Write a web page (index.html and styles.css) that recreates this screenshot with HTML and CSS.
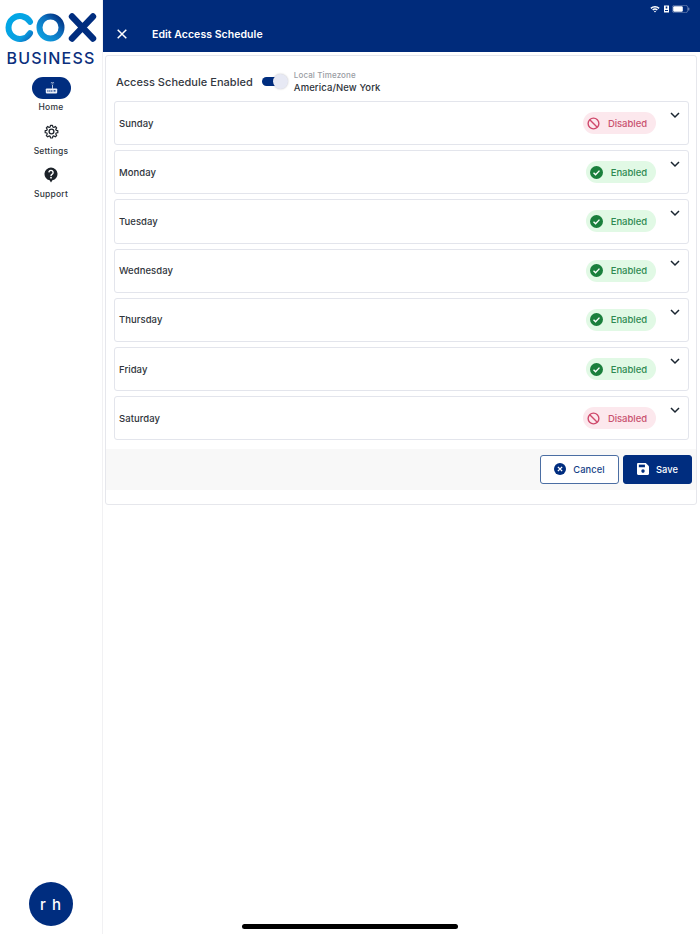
FILE: index.html
```html
<!DOCTYPE html>
<html lang="en">
<head>
<meta charset="utf-8">
<title>Edit Access Schedule</title>
<link rel="stylesheet" href="styles.css">
</head>
<body>
<div class="app">
  <aside class="sidebar">
    <div class="logo">
      <svg class="logo-cox" width="92" height="36" viewBox="0 0 92 36" aria-label="Cox logo">
        <defs>
          <linearGradient id="cg" x1="0" x2="1" y1="0" y2="1"><stop offset="0" stop-color="#00a8e6"/><stop offset="0.75" stop-color="#0aa0e2"/><stop offset="1" stop-color="#0b6fc0"/></linearGradient>
          <linearGradient id="og" x1="0" x2="1" y1="1" y2="0"><stop offset="0" stop-color="#0ea5e4"/><stop offset="0.6" stop-color="#0d6fbe"/><stop offset="1" stop-color="#002a7a"/></linearGradient>
        </defs>
        <path d="M25 11.8 A11.5 11.5 0 1 0 25 23.2" fill="none" stroke="url(#cg)" stroke-width="6" stroke-linecap="round"/>
        <circle cx="45.5" cy="17.5" r="11" fill="none" stroke="url(#og)" stroke-width="6"/>
        <path d="M67 6.5 L88 28.5 M88 6.5 L67 28.5" fill="none" stroke="#002d7f" stroke-width="6.4" stroke-linecap="round"/>
      </svg>
      <div class="logo-business">BUSINESS</div>
    </div>
    <nav class="nav">
      <div class="nav-item">
        <div class="nav-pill">
          <svg width="13" height="13" viewBox="0 0 16 16"><path d="M7.2 1.2a3 3 0 0 1 4 0M8.2 2.6a1.5 1.5 0 0 1 2 0" fill="none" stroke="#dfe6f3" stroke-width="0.9"/><rect x="8.8" y="3.5" width="0.9" height="5" fill="#fff"/><rect x="1" y="8" width="14" height="6" rx="1" fill="#e9eef8"/><path d="M3 10h1.2v2H3zM5.4 10h1.2v2H5.4zM7.8 10H9v2H7.8zM10.6 10.2h2.4v1.6h-2.4z" fill="#002d7f"/></svg>
        </div>
        <span class="nav-label">Home</span>
      </div>
      <div class="nav-item">
        <div class="nav-icon">
          <svg width="15" height="15" viewBox="0 0 24 24"><path d="M10.2 1.8h3.6l.6 3 1.9.8 2.6-1.7 2.5 2.5-1.7 2.6.8 1.9 3 .6v3.6l-3 .6-.8 1.9 1.7 2.6-2.5 2.5-2.6-1.7-1.9.8-.6 3h-3.6l-.6-3-1.9-.8-2.6 1.7-2.5-2.5 1.7-2.6-.8-1.9-3-.6v-3.6l3-.6.8-1.9L2.6 6.4l2.5-2.5 2.6 1.7 1.9-.8z" transform="translate(12 12) scale(.88) translate(-12 -13)" fill="none" stroke="#20262e" stroke-width="2.2" stroke-linejoin="round"/><circle cx="12" cy="12" r="3.8" fill="none" stroke="#20262e" stroke-width="2.2"/></svg>
        </div>
        <span class="nav-label">Settings</span>
      </div>
      <div class="nav-item">
        <div class="nav-icon">
          <svg width="14" height="16" viewBox="0 0 14 16"><path d="M7 .5a6.5 6.5 0 0 1 1.4 12.85L7 15.6l-1.4-2.25A6.5 6.5 0 0 1 7 .5z" fill="#1c2229"/><path d="M4.9 5.4a2.1 2.1 0 1 1 3.3 1.8c-.8.5-1.2.9-1.2 1.7" fill="none" stroke="#fff" stroke-width="1.4"/><circle cx="7" cy="10.7" r=".9" fill="#fff"/></svg>
        </div>
        <span class="nav-label">Support</span>
      </div>
    </nav>
    <div class="avatar">r h</div>
  </aside>
  <main class="main">
    <header class="topbar">
      <div class="status">
        <svg width="10" height="8" viewBox="0 0 10 8"><path d="M.4 2.8a6.6 6.6 0 0 1 9.2 0L8.6 3.9a5.2 5.2 0 0 0-7.2 0zM2.2 4.6a4 4 0 0 1 5.6 0l-1 1a2.6 2.6 0 0 0-3.6 0zM3.9 6.3a1.6 1.6 0 0 1 2.2 0L5 7.6z" fill="#fff"/></svg>
        <svg width="5" height="8" viewBox="0 0 5 8"><path d="M0 .5h5v7H0z" fill="#fff"/><path d="M1.7 1.6h1.6v2H1.7zM1 5h3v1H1z" fill="#002d7f"/></svg>
        <svg width="18" height="8" viewBox="0 0 18 8"><rect x=".3" y=".3" width="15.4" height="7.4" rx="2.2" fill="none" stroke="#8b9dc4" stroke-width=".6"/><rect x="1.2" y="1.2" width="9.6" height="5.6" rx="1.2" fill="#fff"/><rect x="16.3" y="2.6" width="1" height="2.8" rx=".5" fill="#8b9dc4"/></svg>
      </div>
      <div class="titlebar">
        <svg class="close" width="10" height="10" viewBox="0 0 10 10"><path d="M.7.7l8.6 8.6M9.3.7L.7 9.3" stroke="#fff" stroke-width="1.5" fill="none"/></svg>
        <h1 class="title">Edit Access Schedule</h1>
      </div>
    </header>
    <section class="card">
      <div class="card-head">
        <span class="enabled-label">Access Schedule Enabled</span>
        <div class="toggle"><div class="toggle-knob"></div></div>
        <div class="tz">
          <span class="tz-label">Local Timezone</span>
          <span class="tz-value">America/New York</span>
        </div>
      </div>
      <div class="days">
        <div class="day"><span class="day-name">Sunday</span><span class="badge badge-off"><svg width="13" height="13" viewBox="0 0 14 14"><circle cx="7" cy="7" r="5.8" fill="none" stroke="#cf4a6c" stroke-width="1.5"/><path d="M3 3l8 8" stroke="#cf4a6c" stroke-width="1.5"/></svg>Disabled</span><svg class="chev" width="10" height="7" viewBox="0 0 10 7"><path d="M1 1l4 4 4-4" fill="none" stroke="#1a2530" stroke-width="1.5"/></svg></div>
        <div class="day"><span class="day-name">Monday</span><span class="badge badge-on"><svg width="13" height="13" viewBox="0 0 14 14"><circle cx="7" cy="7" r="7" fill="#1a7f3c"/><path d="M3.8 7.2l2.2 2.2 4.2-4.4" fill="none" stroke="#fff" stroke-width="1.5"/></svg>Enabled</span><svg class="chev" width="10" height="7" viewBox="0 0 10 7"><path d="M1 1l4 4 4-4" fill="none" stroke="#1a2530" stroke-width="1.5"/></svg></div>
        <div class="day"><span class="day-name">Tuesday</span><span class="badge badge-on"><svg width="13" height="13" viewBox="0 0 14 14"><circle cx="7" cy="7" r="7" fill="#1a7f3c"/><path d="M3.8 7.2l2.2 2.2 4.2-4.4" fill="none" stroke="#fff" stroke-width="1.5"/></svg>Enabled</span><svg class="chev" width="10" height="7" viewBox="0 0 10 7"><path d="M1 1l4 4 4-4" fill="none" stroke="#1a2530" stroke-width="1.5"/></svg></div>
        <div class="day"><span class="day-name">Wednesday</span><span class="badge badge-on"><svg width="13" height="13" viewBox="0 0 14 14"><circle cx="7" cy="7" r="7" fill="#1a7f3c"/><path d="M3.8 7.2l2.2 2.2 4.2-4.4" fill="none" stroke="#fff" stroke-width="1.5"/></svg>Enabled</span><svg class="chev" width="10" height="7" viewBox="0 0 10 7"><path d="M1 1l4 4 4-4" fill="none" stroke="#1a2530" stroke-width="1.5"/></svg></div>
        <div class="day"><span class="day-name">Thursday</span><span class="badge badge-on"><svg width="13" height="13" viewBox="0 0 14 14"><circle cx="7" cy="7" r="7" fill="#1a7f3c"/><path d="M3.8 7.2l2.2 2.2 4.2-4.4" fill="none" stroke="#fff" stroke-width="1.5"/></svg>Enabled</span><svg class="chev" width="10" height="7" viewBox="0 0 10 7"><path d="M1 1l4 4 4-4" fill="none" stroke="#1a2530" stroke-width="1.5"/></svg></div>
        <div class="day"><span class="day-name">Friday</span><span class="badge badge-on"><svg width="13" height="13" viewBox="0 0 14 14"><circle cx="7" cy="7" r="7" fill="#1a7f3c"/><path d="M3.8 7.2l2.2 2.2 4.2-4.4" fill="none" stroke="#fff" stroke-width="1.5"/></svg>Enabled</span><svg class="chev" width="10" height="7" viewBox="0 0 10 7"><path d="M1 1l4 4 4-4" fill="none" stroke="#1a2530" stroke-width="1.5"/></svg></div>
        <div class="day"><span class="day-name">Saturday</span><span class="badge badge-off"><svg width="13" height="13" viewBox="0 0 14 14"><circle cx="7" cy="7" r="5.8" fill="none" stroke="#cf4a6c" stroke-width="1.5"/><path d="M3 3l8 8" stroke="#cf4a6c" stroke-width="1.5"/></svg>Disabled</span><svg class="chev" width="10" height="7" viewBox="0 0 10 7"><path d="M1 1l4 4 4-4" fill="none" stroke="#1a2530" stroke-width="1.5"/></svg></div>
      </div>
      <div class="actions">
        <button class="btn btn-cancel"><svg width="12" height="12" viewBox="0 0 13 13"><circle cx="6.5" cy="6.5" r="6.5" fill="#002d7f"/><path d="M4.2 4.2l4.6 4.6M8.8 4.2L4.2 8.8" stroke="#fff" stroke-width="1.5"/></svg>Cancel</button>
        <button class="btn btn-save"><svg width="12" height="12" viewBox="0 0 13 13"><path d="M1.3 0h8.2L13 3.5v8.2c0 .7-.6 1.3-1.3 1.3H1.3C.6 13 0 12.4 0 11.7V1.3C0 .6.6 0 1.3 0z" fill="#fff"/><path d="M2 1.8h6.6v2.8H2z" fill="#002d7f"/><circle cx="6.5" cy="8.8" r="1.9" fill="#002d7f"/></svg>Save</button>
      </div>
    </section>
  </main>
  <div class="home-indicator"></div>
</div>
</body>
</html>
```
FILE: styles.css
```css
* { box-sizing: border-box; }
html, body { margin: 0; padding: 0; height: 100%; background: #fff; }
body { font-family: Inter, "Noto Sans", "Liberation Sans", sans-serif; color: #2a2f36; }
.app { position: relative; display: flex; width: 700px; height: 934px; overflow: hidden; }
.sidebar { width: 103px; flex: none; display: flex; flex-direction: column; align-items: center; border-right: 1px solid #f1f1f3; padding-bottom: 8px; }
.logo { display: flex; flex-direction: column; align-items: center; padding-top: 10px; width: 100%; }
.logo-cox { display: block; }
.logo-business { font-size: 16px; line-height: 20px; font-weight: 500; color: #0b2f7d; letter-spacing: 1.2px; margin-top: 2px; }
.nav { display: flex; flex-direction: column; align-items: center; margin-top: 9px; width: 100%; }
.nav-item { display: flex; flex-direction: column; align-items: center; height: 43.6px; }
.nav-pill { width: 39px; height: 22px; border-radius: 11px; background: #002d7f; display: flex; align-items: center; justify-content: center; }
.nav-icon { width: 39px; height: 22px; display: flex; align-items: center; justify-content: center; }
.nav-label { font-size: 8.5px; line-height: 12px; font-weight: 500; letter-spacing: 0.2px; color: #30363d; margin-top: 2px; }
.avatar { margin-top: auto; width: 44px; height: 44px; border-radius: 50%; background: #002d7f; color: #fff; display: flex; align-items: center; justify-content: center; font-size: 15px; font-weight: 500; letter-spacing: 1px; }
.main { flex: 1; min-width: 0; display: flex; flex-direction: column; }
.topbar { background: #002b7b; height: 52px; display: flex; flex-direction: column; }
.status { display: flex; justify-content: flex-end; align-items: center; gap: 3.5px; padding: 4px 10px 0 0; height: 13px; }
.titlebar { display: flex; align-items: center; height: 30px; padding-left: 14px; margin-top: 6px; }
.close { flex: none; }
.title { margin: 0 0 0 25px; font-size: 10.5px; font-weight: 600; color: #fff; letter-spacing: 0.05px; }
.card { margin: 3px 3px 0 2px; border: 1px solid #e6e7ec; border-radius: 3px; height: 450px; display: flex; flex-direction: column; }
.card-head { display: flex; align-items: center; height: 45px; padding: 6px 0 0 10px; }
.enabled-label { font-size: 11px; font-weight: 500; letter-spacing: 0.03px; color: #33383f; }
.toggle { position: relative; width: 21px; height: 9px; background: #002d7f; border-radius: 5px; margin-left: 9px; margin-right: 11px; }
.toggle-knob { position: absolute; right: -5px; top: -3px; width: 15px; height: 15px; border-radius: 50%; background: #e7e9f4; box-shadow: 0 0 2px rgba(0,0,0,.25); }
.tz { display: flex; flex-direction: column; margin-top: 0; }
.tz-label { font-size: 8px; line-height: 11px; color: #9a9da3; letter-spacing: 0.12px; font-weight: 500; }
.tz-value { font-size: 9.5px; line-height: 13px; color: #2e3339; font-weight: 500; letter-spacing: 0.1px; }
.days { display: flex; flex-direction: column; gap: 5px; padding: 0 7px 0 8px; }
.day { position: relative; display: flex; align-items: center; height: 44.2px; border: 1px solid #e3e5ec; border-radius: 3px; padding: 0 32px 0 4px; }
.day-name { flex: 1; font-size: 9.5px; font-weight: 500; letter-spacing: 0.05px; color: #30353b; }
.badge { display: flex; align-items: center; height: 22px; border-radius: 11px; padding: 0 9px 0 4px; gap: 8px; font-size: 9.5px; font-weight: 500; letter-spacing: -0.05px; }
.badge-off { background: #fce8ed; color: #c9506f; }
.badge-on { background: #e1f9e5; color: #2f8a52; }
.chev { position: absolute; right: 8px; top: 10px; }
.actions { display: flex; justify-content: flex-end; align-items: center; gap: 4px; height: 41px; margin-top: 8.5px; background: #f8f8f8; padding-right: 4px; }
.btn { display: flex; align-items: center; justify-content: center; gap: 7px; height: 29px; border-radius: 3px; font-family: inherit; font-size: 9.3px; font-weight: 500; letter-spacing: 0.1px; }
.btn-cancel { width: 79px; background: #fff; border: 1px solid #4b6ea3; color: #173f86; }
.btn-save { width: 69px; background: #002d7f; border: 1px solid #002d7f; color: #fff; }
.home-indicator { position: absolute; left: 242px; bottom: 5px; width: 216px; height: 5px; border-radius: 3px; background: #000; }
```
